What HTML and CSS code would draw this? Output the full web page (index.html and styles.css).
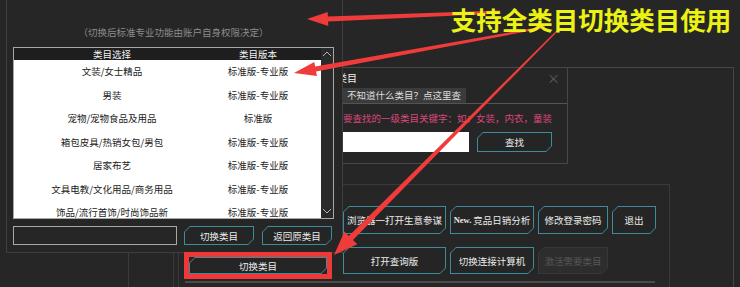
FILE: index.html
```html
<!DOCTYPE html>
<html lang="zh-CN">
<head>
  <meta charset="UTF-8" />
  <title>切换类目</title>
  <link rel="stylesheet" href="styles.css">
</head>
<body>
  <div class="desk">

    <div class="win-main"></div>

    <div class="search-dlg">
      <div class="dlg-title">
        <span>选择类目</span>
        <span class="dlg-close">×</span>
      </div>
      <div class="dlg-link-row">
        <span class="dlg-link">不知道什么类目？点这里查</span>
      </div>
      <div class="dlg-hint">要查找的一级类目关键字：如：女装，内衣，童装</div>
      <div class="dlg-search">
        <div class="white-input"></div>
        <div class="btn btn-find"><span>查找</span></div>
      </div>
    </div>

    <div class="btn-panel">
      <div class="btn-grid">
        <div class="btn"><span>浏览器一打开生意参谋</span></div>
        <div class="btn"><span><b class="new">New.</b>竞品日销分析</span></div>
        <div class="btn"><span>修改登录密码</span></div>
        <div class="btn"><span>退出</span></div>
        <div class="btn"><span>打开查询版</span></div>
        <div class="btn"><span>切换连接计算机</span></div>
        <div class="btn btn-off"><span>激活需要类目</span></div>
      </div>
      <div class="panel-line"></div>
    </div>

    <div class="back-lines"></div>

    <div class="left-win">
      <div class="caption">（切换后标准专业功能由账户自身权限决定）</div>
      <div class="cat-list">
        <div class="cat-main">
          <div class="cat-head">
            <span>类目选择</span>
            <span>类目版本</span>
          </div>
          <div class="cat-body">
            <div class="cat-row"><span>文装/女士精品</span><span>标准版-专业版</span></div>
            <div class="cat-row"><span>男装</span><span>标准版-专业版</span></div>
            <div class="cat-row"><span>宠物/宠物食品及用品</span><span>标准版</span></div>
            <div class="cat-row"><span>箱包皮具/热销女包/男包</span><span>标准版-专业版</span></div>
            <div class="cat-row"><span>居家布艺</span><span>标准版-专业版</span></div>
            <div class="cat-row"><span>文具电教/文化用品/商务用品</span><span>标准版-专业版</span></div>
            <div class="cat-row"><span>饰品/流行首饰/时尚饰品新</span><span>标准版-专业版</span></div>
          </div>
        </div>
        <div class="scrollbar">
          <svg width="12" height="10" viewBox="0 0 12 10"><path d="M2 7 L6 3 L10 7" fill="none" stroke="#b5b5b5" stroke-width="1"/></svg>
          <svg width="12" height="10" viewBox="0 0 12 10"><path d="M2 3 L6 7 L10 3" fill="none" stroke="#b5b5b5" stroke-width="1"/></svg>
        </div>
      </div>
      <div class="list-foot">
        <div class="dark-input"></div>
        <div class="btn btn-small"><span>切换类目</span></div>
        <div class="btn btn-small"><span>返回原类目</span></div>
      </div>
    </div>

    <div class="red-box">
      <div class="btn btn-wide"><span>切换类目</span></div>
    </div>

    <svg class="arrows" width="740" height="287" viewBox="0 0 740 287">
      <polygon fill="#f03b3b" points="500.1,13.5 328.1,21.6 328.3,26.1 307,19 327.7,12.1 327.9,16.6 499.9,10.5"/>
      <polygon fill="#f03b3b" points="545.2,28 316.1,71.5 316.9,75.9 294,73 314.3,62.1 315.1,66.5 544.8,26"/>
      <polygon fill="#f03b3b" points="560.4,28.4 353,240.1 357.3,244.3 334,255 344.5,231.6 348.8,235.9 559.6,27.6"/>
    </svg>

    <div class="headline">支持全类目切换类目使用</div>
  </div>
</body>
</html>
```

FILE: styles.css
```css
body {
  margin: 0;
  background: #262626;
  font-family: "Noto Sans CJK SC", "Noto Sans", sans-serif;
  font-size: 9.5px;
}

.desk {
  position: relative;
  width: 740px;
  height: 287px;
  overflow: hidden;
  background: #262626;
}

/* background windows */

.win-main {
  position: absolute;
  left: 178px;
  top: 67px;
  width: 556px;
  height: 240px;
  box-sizing: border-box;
  border: 1px solid #474747;
}

.search-dlg {
  position: absolute;
  left: 300px;
  top: 67px;
  width: 268px;
  height: 97px;
  box-sizing: border-box;
  border: 1px solid #474747;
  background: #262626;
}

.dlg-title {
  display: flex;
  justify-content: space-between;
  height: 20px;
  line-height: 20px;
  padding: 0 7px 0 16px;
  color: #f2f2f2;
  font-size: 10px;
}

.dlg-close {
  color: #5e5e5e;
  font-size: 13px;
}

.dlg-link-row {
  height: 15px;
  padding-left: 42px;
  border-bottom: 1px solid #545454;
}

.dlg-link {
  display: block;
  width: 123px;
  height: 15px;
  line-height: 15px;
  padding-left: 4px;
  box-sizing: border-box;
  background: #3b3b3b;
  color: #dedede;
}

.dlg-hint {
  margin-top: 7px;
  padding-left: 42px;
  line-height: 14px;
  color: #dc477c;
  white-space: nowrap;
}

.dlg-search {
  display: flex;
  gap: 8px;
  margin-top: 7px;
  padding-left: 42px;
}

.white-input {
  width: 126px;
  height: 20px;
  background: #fff;
}

.btn-find {
  width: 75px;
  height: 20px;
}

.btn-panel {
  position: absolute;
  left: 178px;
  top: 184px;
  width: 492px;
  height: 120px;
  box-sizing: border-box;
  border: 1px solid #3a3a3a;
  padding: 21px 0 0 6px;
}

.btn-grid {
  display: grid;
  grid-template-columns: 103px 84px 70px 44px;
  grid-template-rows: 28px 27px;
  column-gap: 4px;
  row-gap: 13px;
  margin-left: 158px;
}

.panel-line {
  width: 470px;
  margin-top: 7px;
  border-top: 2px solid #4a4a4a;
}

.back-lines {
  position: absolute;
  left: 128px;
  top: 240px;
  width: 46px;
  height: 60px;
  box-sizing: border-box;
  border-left: 1px solid #3a3a3a;
  border-right: 1px solid #3a3a3a;
}

/* buttons with cut corners */

.btn {
  display: flex;
  padding: 1px;
  box-sizing: border-box;
  background: #3c8d9c;
  clip-path: polygon(6px 0, 100% 0, 100% calc(100% - 6px), calc(100% - 6px) 100%, 0 100%, 0 6px);
}

.btn span {
  flex: 1;
  display: flex;
  align-items: center;
  justify-content: center;
  background: #252525;
  color: #ececec;
  white-space: nowrap;
  clip-path: polygon(5px 0, 100% 0, 100% calc(100% - 5px), calc(100% - 5px) 100%, 0 100%, 0 5px);
}

.btn-off {
  background: #383838;
}

.btn-off span {
  background: #2d2d2d;
  color: #575757;
}

.new {
  font-family: "Liberation Serif", serif;
  font-size: 8.5px;
  margin-right: 2px;
}

/* left window: category switcher */

.left-win {
  position: absolute;
  left: 6px;
  top: -1px;
  width: 337px;
  height: 254px;
  box-sizing: border-box;
  border: 1px solid #3e3e3e;
  background: #262626;
  padding: 25px 0 0 6px;
}

.caption {
  width: 321px;
  text-align: center;
  line-height: 14px;
  color: #8c8c8c;
}

.cat-list {
  display: flex;
  width: 321px;
  height: 172px;
  margin-top: 8px;
  box-sizing: border-box;
  border: 1px solid #a8a8a8;
  background: #fff;
}

.cat-main {
  width: 307px;
  display: flex;
  flex-direction: column;
}

.cat-head,
.cat-row {
  display: grid;
  grid-template-columns: 196px 96px;
  white-space: nowrap;
}

.cat-head span,
.cat-row span {
  text-align: center;
}

.cat-head {
  height: 12px;
  line-height: 12px;
  background: #1e1e1e;
  color: #f2f2f2;
}

.cat-body {
  flex: 1;
  overflow: hidden;
}

.cat-row {
  height: 23.5px;
  line-height: 23.5px;
  color: #222;
}

.scrollbar {
  width: 12px;
  background: #2a2a2a;
  display: flex;
  flex-direction: column;
  justify-content: space-between;
  padding: 1px 0 2px;
}

.list-foot {
  display: flex;
  margin-top: 7px;
  height: 19px;
}

.dark-input {
  width: 164px;
  box-sizing: border-box;
  border: 1px solid #a8a8a8;
  background: #262626;
  margin-right: 7px;
}

.btn-small {
  width: 70px;
  margin-right: 8px;
}

/* annotations */

.red-box {
  position: absolute;
  left: 184px;
  top: 252px;
  width: 148px;
  height: 27px;
  box-sizing: border-box;
  border: 5px solid #ef3838;
  display: flex;
}

.btn-wide {
  flex: 1;
}

.arrows {
  position: absolute;
  left: 0;
  top: 0;
}

.headline {
  position: absolute;
  left: 446px;
  top: 4px;
  width: 290px;
  text-align: center;
  font-size: 25.5px;
  font-weight: 700;
  line-height: 30px;
  color: #ecf214;
  white-space: nowrap;
}
```
